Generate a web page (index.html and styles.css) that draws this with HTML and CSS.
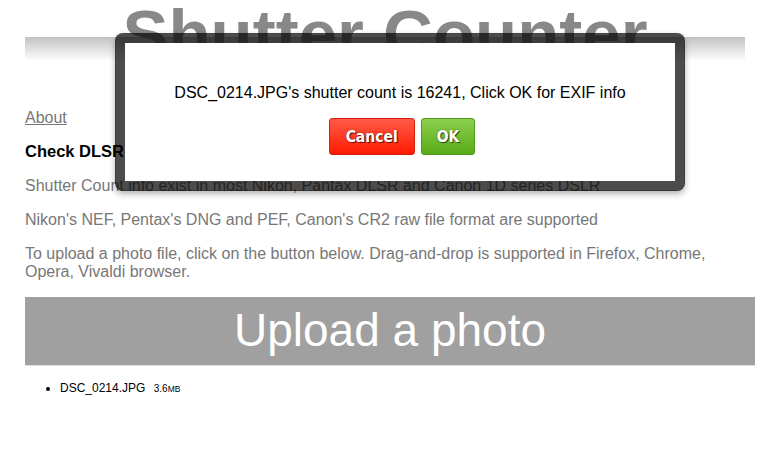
FILE: index.html
```html
<!DOCTYPE html>
<html lang="en">
<head>
    <meta charset="UTF-8">
    <meta name="viewport" content="width=device-width, initial-scale=1.0">
    <title>Shutter Counter</title>
    <link rel="stylesheet" href="styles.css">
</head>
<body>
    <div class="page">
        <h1 class="title">Shutter Counter</h1>

        <div class="nav">
            <a href="#">About</a>
        </div>

        <h2 class="lead">Check DLSR Shutter Count</h2>
        <p>Shutter Count info exist in most Nikon, Pantax DLSR and Canon 1D series DSLR</p>
        <p>Nikon's NEF, Pentax's DNG and PEF, Canon's CR2 raw file format are supported</p>
        <p>To upload a photo file, click on the button below. Drag-and-drop is supported in Firefox, Chrome, Opera, Vivaldi browser.</p>

        <div class="upload">Upload a photo</div>

        <ul class="files">
            <li>DSC_0214.JPG <span class="size">3.6<span class="unit">MB</span></span></li>
        </ul>
    </div>

    <div class="dialog">
        <div class="dialog-msg">DSC_0214.JPG's shutter count is 16241, Click OK for EXIF info</div>
        <div class="dialog-buttons">
            <button class="btn btn-cancel">Cancel</button>
            <button class="btn btn-ok">OK</button>
        </div>
    </div>
</body>
</html>
```

FILE: styles.css
```css
body {
    margin: 0;
    font-family: "Liberation Sans", Arial, sans-serif;
    font-size: 16px;
    background-color: white;
    color: #777;
}
.page {
    width: 730px;
    padding-left: 25px;
}
.title {
    margin: 0 10px 40px 0;
    font-size: 69px;
    line-height: 69px;
    font-weight: bold;
    text-align: center;
    color: #888;
    background: linear-gradient(#c2c2c2, #fff) no-repeat 0 37px / 100% 24px;
}
.nav a {
    color: #777;
}
.lead {
    margin: 15px 0;
    font-size: 16.5px;
    color: black;
}
p {
    margin: 16px 0;
}
.upload {
    margin-top: 16px;
    padding: 6px 0 8px;
    background-color: #a0a0a0;
    border-bottom: 1px solid #e2e2e2;
    color: white;
    font-size: 46px;
    text-align: center;
}
.files {
    margin: 15px 0;
    padding-left: 35px;
    font-size: 12px;
    color: black;
}
.size {
    margin-left: 5px;
    font-size: 10px;
}
.unit {
    font-size: 8.5px;
}
.dialog {
    position: absolute;
    left: 115px;
    top: 33px;
    width: 550px;
    padding: 41px 0 26px;
    background-color: white;
    background-clip: padding-box;
    border: 10px solid rgba(0, 0, 0, 0.7);
    border-radius: 8px;
    box-shadow: 0 3px 6px rgba(0, 0, 0, 0.3);
    text-align: center;
    color: black;
}
.dialog-buttons {
    display: flex;
    justify-content: center;
    gap: 6px;
    margin-top: 16px;
    padding-left: 4px;
}
.btn {
    height: 37px;
    padding: 0 15px;
    border-radius: 3px;
    font-family: "DejaVu Sans Condensed", "DejaVu Sans", Verdana, sans-serif;
    font-size: 15.5px;
    font-weight: bold;
    color: white;
    text-shadow: 1px 1px 0 rgba(0, 0, 0, 0.55), 0 0 2px rgba(0, 0, 0, 0.4);
    cursor: pointer;
}
.btn-cancel {
    padding: 0 16px;
    border: 1px solid #d4200e;
    background: linear-gradient(#ff5a48, #ff1a00);
}
.btn-ok {
    border: 1px solid #4e9a18;
    background: linear-gradient(#8dd050, #58aa16);
}
```
